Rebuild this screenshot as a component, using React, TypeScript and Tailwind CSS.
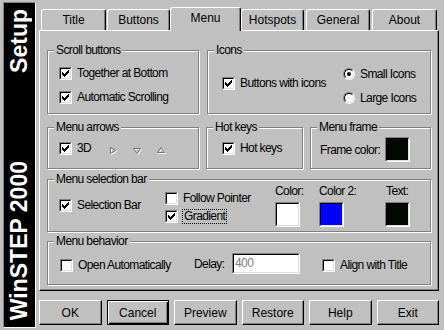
import React from 'react';

const CHECK_PIXELS: [number, number][] = [
  [6, 0], [5, 1], [6, 1], [0, 2], [4, 2], [5, 2], [6, 2],
  [0, 3], [1, 3], [3, 3], [4, 3], [5, 3], [0, 4], [1, 4], [2, 4], [3, 4], [4, 4],
  [1, 5], [2, 5], [3, 5], [2, 6],
];

const CheckBox = ({ checked }: { checked?: boolean }) => (
  <span className="block w-[13px] h-[13px] shrink-0 border border-t-[#808080] border-l-[#808080] border-r-white border-b-white">
    <span className="relative block w-full h-full border border-t-black border-l-black border-r-[#dfdfdf] border-b-[#dfdfdf] bg-white">
      {checked && (
        <svg className="absolute left-[1px] top-[1px]" width="7" height="7" viewBox="0 0 7 7" shapeRendering="crispEdges">
          {CHECK_PIXELS.map(([x, y]) => (
            <rect key={`${x}-${y}`} x={x} y={y} width="1" height="1" fill="#000" />
          ))}
        </svg>
      )}
    </span>
  </span>
);

const Radio = ({ checked }: { checked?: boolean }) => (
  <span className="block w-[12px] h-[12px] shrink-0 rounded-full border border-t-[#808080] border-l-[#808080] border-r-white border-b-white">
    <span className="flex items-center justify-center w-full h-full rounded-full border border-t-black border-l-black border-r-[#dfdfdf] border-b-[#dfdfdf] bg-white">
      {checked && <span className="block w-[4px] h-[4px] rounded-full bg-black" />}
    </span>
  </span>
);

const Swatch = ({ color }: { color: string }) => (
  <span className="block w-[25px] h-[25px] shrink-0 border border-t-[#808080] border-l-[#808080] border-r-white border-b-white">
    <span className={`block w-full h-full border border-t-black border-l-black border-r-[#dfdfdf] border-b-[#dfdfdf] ${color}`} />
  </span>
);

const CheckRow = ({ checked, label, focus }: { checked?: boolean; label: string; focus?: boolean }) => (
  <div className="flex items-center h-[13px]">
    <CheckBox checked={checked} />
    {focus ? (
      <span className="ml-[4px] px-[1px] leading-[13px] border border-dotted border-black">{label}</span>
    ) : (
      <span className="ml-[5px] leading-[13px] whitespace-nowrap">{label}</span>
    )}
  </div>
);

const RadioRow = ({ checked, label }: { checked?: boolean; label: string }) => (
  <div className="flex items-center h-[12px]">
    <Radio checked={checked} />
    <span className="ml-[5px] leading-[13px] whitespace-nowrap">{label}</span>
  </div>
);

const Group = ({ title, className, children }: { title: string; className?: string; children?: React.ReactNode }) => (
  <div className={`relative border border-[#808080] shadow-[inset_1px_1px_0_#fff,1px_1px_0_#fff] ${className ?? ''}`}>
    <span className="absolute -top-[8px] left-[6px] bg-[#c0c0c0] px-[2px] leading-[14px] whitespace-nowrap">{title}</span>
    {children}
  </div>
);

// little etched triangles used as arrow samples
const Arrow = ({ dir }: { dir: 'right' | 'down' | 'up' }) => {
  const pts = {
    right: '1.5,0.5 6.5,3.5 1.5,6.5',
    down: '0.5,1.5 7.5,1.5 4,6.5',
    up: '4,0.5 7.5,5.5 0.5,5.5',
  }[dir];
  return (
    <svg width="9" height="8" viewBox="0 0 9 8">
      <polygon points={pts} transform="translate(1 1)" fill="none" stroke="#fff" strokeWidth="1" />
      <polygon points={pts} fill="none" stroke="#707070" strokeWidth="1" />
    </svg>
  );
};

const tabs = [
  { label: 'Title', cls: 'ml-[2px] w-[65px]' },
  { label: 'Buttons', cls: 'ml-[1px] w-[63px]' },
  { label: 'Menu', cls: 'w-[71px]', active: true },
  { label: 'Hotspots', cls: 'w-[63px]' },
  { label: 'General', cls: 'ml-[2px] w-[64px]' },
  { label: 'About', cls: 'ml-[2px] w-[65px]' },
];

const buttons = ['OK', 'Cancel', 'Preview', 'Restore', 'Help', 'Exit'];

export default function App() {
  return (
    <div className="w-[444px] h-[330px] bg-[#c0c0c0] flex text-[12px] text-black font-['Liberation_Sans',Arial,sans-serif] overflow-hidden">
      {/* side banner */}
      <div className="ml-[3px] mt-[2px] w-[33px] h-[326px] border border-t-[#808080] border-l-[#808080] border-r-white border-b-white bg-black flex flex-col justify-between items-center pt-[6px] pb-[7px]">
        <span className="[writing-mode:vertical-rl] rotate-180 text-white font-bold text-[23px] leading-[23px]">Setup</span>
        <span className="[writing-mode:vertical-rl] rotate-180 text-white font-bold text-[23px] leading-[23px] whitespace-nowrap">WinSTEP 2000</span>
      </div>

      <div className="ml-[3px] w-[400px] flex flex-col pt-[7px]">
        {/* tabs */}
        <div className="flex items-end h-[23px]">
          {tabs.map((t) =>
            t.active ? (
              <div
                key={t.label}
                className={`relative z-10 -mb-[1px] h-[24px] ${t.cls} bg-[#c0c0c0] border-t border-l border-r border-t-white border-l-white border-r-black shadow-[inset_-1px_0_0_#808080] rounded-t-[3px] flex items-center justify-center pb-[3px]`}
              >
                {t.label}
              </div>
            ) : (
              <div
                key={t.label}
                className={`h-[21px] ${t.cls} border-t border-l border-r border-t-white border-l-white border-r-black shadow-[inset_-1px_0_0_#808080] rounded-t-[3px] flex items-center justify-center`}
              >
                {t.label}
              </div>
            )
          )}
        </div>

        {/* tab page */}
        <div className="h-[261px] border border-t-white border-l-white border-r-black border-b-black shadow-[inset_-1px_-1px_0_#808080] px-[7px] pt-[19px] tracking-[-0.6px]">
          <div className="flex h-[64px]">
            <Group title="Scroll buttons" className="w-[152px]">
              <div className="flex flex-col gap-[11px] pl-[11px] pt-[16px]">
                <CheckRow checked label="Together at Bottom" />
                <CheckRow checked label="Automatic Scrolling" />
              </div>
            </Group>
            <Group title="Icons" className="ml-[8px] flex-1 flex">
              <div className="w-[135px] pl-[14px] pt-[26px]">
                <CheckRow checked label="Buttons with icons" />
              </div>
              <div className="flex flex-col gap-[12px] pt-[17px]">
                <RadioRow checked label="Small Icons" />
                <RadioRow label="Large Icons" />
              </div>
            </Group>
          </div>

          <div className="flex h-[42px] mt-[13px]">
            <Group title="Menu arrows" className="w-[152px]">
              <div className="flex items-center pl-[11px] pt-[14px]">
                <CheckBox checked />
                <span className="ml-[5px] w-[32px] leading-[13px]">3D</span>
                <div className="flex items-center gap-[15px] mt-[4px]">
                  <Arrow dir="right" />
                  <Arrow dir="down" />
                  <Arrow dir="up" />
                </div>
              </div>
            </Group>
            <Group title="Hot keys" className="ml-[7px] w-[97px]">
              <div className="pl-[15px] pt-[14px]">
                <CheckRow checked label="Hot keys" />
              </div>
            </Group>
            <Group title="Menu frame" className="ml-[7px] flex-1">
              <div className="flex items-center pl-[9px] pt-[9px]">
                <span className="w-[65px] whitespace-nowrap">Frame color:</span>
                <Swatch color="bg-[#000800]" />
              </div>
            </Group>
          </div>

          <Group title="Menu selection bar" className="h-[53px] mt-[10px] flex pl-[11px]">
            <div className="w-[106px] pt-[19px]">
              <CheckRow checked label="Selection Bar" />
            </div>
            <div className="w-[110px] pt-[12px] flex flex-col gap-[5px]">
              <CheckRow label="Follow Pointer" />
              <CheckRow checked focus label="Gradient" />
            </div>
            <div className="w-[44px] pt-[4px]">
              <div className="leading-[14px]">Color:</div>
              <div className="mt-[4px]"><Swatch color="bg-white" /></div>
            </div>
            <div className="w-[66px] pt-[4px]">
              <div className="leading-[14px]">Color 2:</div>
              <div className="mt-[4px]"><Swatch color="bg-[#0000ff]" /></div>
            </div>
            <div className="pt-[4px]">
              <div className="leading-[14px] pl-[1px]">Text:</div>
              <div className="mt-[4px]"><Swatch color="bg-[#000800]" /></div>
            </div>
          </Group>

          <Group title="Menu behavior" className="h-[44px] mt-[9px] flex items-start pl-[12px]">
            <div className="w-[134px] mt-[17px]">
              <CheckRow label="Open Automatically" />
            </div>
            <span className="w-[38px] mt-[15px] leading-[14px]">Delay:</span>
            <div className="mt-[11px] w-[68px] h-[21px] border border-t-[#808080] border-l-[#808080] border-r-white border-b-white">
              <div className="w-full h-full border border-t-black border-l-black border-r-[#dfdfdf] border-b-[#dfdfdf] bg-white text-[#808080] pl-[1px] leading-[17px]">
                400
              </div>
            </div>
            <div className="ml-[22px] mt-[17px]">
              <CheckRow label="Align with Title" />
            </div>
          </Group>
        </div>

        {/* buttons */}
        <div className="grid grid-cols-6 gap-[5px] h-[25px] mt-[9px]">
          {buttons.map((b) =>
            b === 'Cancel' ? (
              <button
                key={b}
                className="border border-black shadow-[inset_1px_1px_0_#fff,inset_-1px_-1px_0_#000,inset_-2px_-2px_0_#808080] flex items-center justify-center"
              >
                {b}
              </button>
            ) : (
              <button
                key={b}
                className="border border-t-white border-l-white border-r-black border-b-black shadow-[inset_-1px_-1px_0_#808080] flex items-center justify-center"
              >
                {b}
              </button>
            )
          )}
        </div>
      </div>
    </div>
  );
}
